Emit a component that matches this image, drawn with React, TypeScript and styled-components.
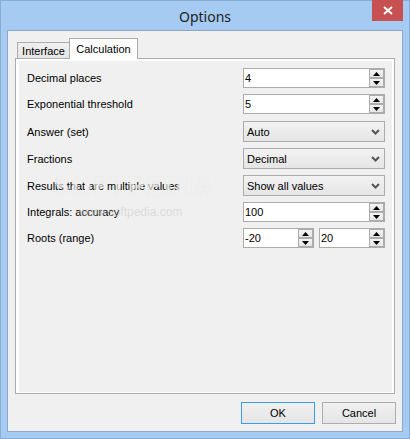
import React from "react";
import styled, { createGlobalStyle } from "styled-components";

const GlobalStyle = createGlobalStyle`
  html, body { margin: 0; padding: 0; width: 410px; height: 439px; overflow: hidden; background: #a6cbf3; }
  * { box-sizing: border-box; }
`;

const Window = styled.div`
  position: relative;
  width: 410px;
  height: 439px;
  background: #a6cbf3;
  border: 1px solid #88acd6;
  display: flex;
  flex-direction: column;
  font-family: "Liberation Sans", Arial, sans-serif;
  font-size: 11px;
  color: #000;
`;

const TitleBar = styled.div`
  height: 29px;
  display: flex;
  align-items: center;
  justify-content: center;
  font-family: "Segoe UI", "Noto Sans", sans-serif;
  font-size: 14px;
  color: #222;
  padding-top: 1px;
`;

const CloseButton = styled.div`
  position: absolute;
  top: -1px;
  right: 6px;
  width: 31px;
  height: 21px;
  background: #c75050;
  display: flex;
  align-items: center;
  justify-content: center;
`;

const Client = styled.div`
  flex: 1;
  margin: 0 6px 6px;
  border: 1px solid #8ea6c4;
  background: #f0f0f0;
  padding: 7px;
  display: flex;
  flex-direction: column;
`;

const TabStrip = styled.div`
  height: 20px;
  display: flex;
  align-items: flex-end;
  padding-left: 2px;
`;

const Tab = styled.div<{ $active?: boolean }>`
  position: relative;
  display: flex;
  align-items: center;
  justify-content: center;
  border: 1px solid #acacac;
  border-bottom: none;
  width: ${(p) => (p.$active ? 69 : 53)}px;
  height: ${(p) => (p.$active ? 21 : 16)}px;
  margin-left: ${(p) => (p.$active ? -1 : 0)}px;
  margin-bottom: ${(p) => (p.$active ? -1 : 0)}px;
  background: ${(p) => (p.$active ? "#ffffff" : "linear-gradient(#f0f0f0, #e5e5e5)")};
  z-index: ${(p) => (p.$active ? 1 : 0)};
  padding-top: ${(p) => (p.$active ? 0 : 1)}px;
`;

const Panel = styled.div`
  height: 336px;
  border: 1px solid #acacac;
  background: #ffffff;
  padding: 2px 2px 1px 3px;
  display: flex;
`;

const Page = styled.div`
  flex: 1;
  background: #f0f0f0;
  padding: 7px 6px 0 8px;
  display: flex;
  flex-direction: column;
  gap: 6px;
`;

const Row = styled.div<{ $h: number; $extra?: number }>`
  display: grid;
  grid-template-columns: 216px 142px;
  align-items: center;
  height: ${(p) => p.$h}px;
  margin-top: ${(p) => p.$extra ?? 0}px;
`;

const Label = styled.span`
  white-space: nowrap;
`;

const Pair = styled.div`
  display: flex;
  gap: 5px;
  height: 100%;
`;

const SpinBox = styled.div<{ $w?: number }>`
  display: flex;
  width: ${(p) => (p.$w ? `${p.$w}px` : "100%")};
  height: 100%;
  border: 1px solid #acacac;
  background: #fff;
`;

const Value = styled.span`
  flex: 1;
  display: flex;
  align-items: center;
  padding-left: 1px;
`;

const Spinner = styled.div`
  width: 15px;
  display: flex;
  flex-direction: column;
`;

const SpinBtn = styled.div`
  flex: 1;
  border: 1px solid #acacac;
  background: linear-gradient(#f3f3f3, #e6e6e6);
  display: flex;
  align-items: center;
  justify-content: center;
`;

const Combo = styled.div`
  display: flex;
  align-items: center;
  justify-content: space-between;
  height: 100%;
  border: 1px solid #acacac;
  background: linear-gradient(#f2f2f2, #e5e5e5);
  padding: 0 4px 0 3px;
`;

const Footer = styled.div`
  display: flex;
  justify-content: flex-end;
  gap: 7px;
  margin-top: 8px;
  margin-right: -1px;
`;

const Button = styled.div<{ $default?: boolean }>`
  width: 74px;
  height: 22px;
  display: flex;
  align-items: center;
  justify-content: center;
  border: 1px solid ${(p) => (p.$default ? "#3c9cf0" : "#acacac")};
  background: linear-gradient(#f0f0f0, #e5e5e5);
`;

const Watermark = styled.div`
  position: absolute;
  left: 52px;
  top: 172px;
  pointer-events: none;
  display: flex;
  flex-direction: column;
  align-items: flex-start;
`;

const WmBig = styled.span`
  font-family: "DejaVu Sans", sans-serif;
  font-weight: bold;
  font-size: 24px;
  letter-spacing: 1px;
  color: rgba(255, 255, 255, 0.55);
  text-shadow: 0 0 1px rgba(190, 190, 190, 0.35);
`;

const WmSmall = styled.span`
  margin-left: 26px;
  margin-top: 4px;
  font-family: "Liberation Sans", Arial, sans-serif;
  font-size: 12px;
  color: rgba(200, 200, 200, 0.55);
`;

const Up = () => (
  <svg width="7" height="4" viewBox="0 0 7 4">
    <polygon points="0,4 7,4 3.5,0" fill="#000" />
  </svg>
);
const Down = () => (
  <svg width="7" height="4" viewBox="0 0 7 4">
    <polygon points="0,0 7,0 3.5,4" fill="#000" />
  </svg>
);
const Chevron = () => (
  <svg width="9" height="6" viewBox="0 0 9 6">
    <polyline points="1,1 4.5,4.5 8,1" fill="none" stroke="#555" strokeWidth="2" />
  </svg>
);

const Numeric = ({ value, w }: { value: string; w?: number }) => (
  <SpinBox $w={w}>
    <Value>{value}</Value>
    <Spinner>
      <SpinBtn>
        <Up />
      </SpinBtn>
      <SpinBtn>
        <Down />
      </SpinBtn>
    </Spinner>
  </SpinBox>
);

const Select = ({ value }: { value: string }) => (
  <Combo>
    <span>{value}</span>
    <Chevron />
  </Combo>
);

export default function App() {
  return (
    <>
      <GlobalStyle />
      <Window>
        <TitleBar>Options</TitleBar>
        <CloseButton>
          <svg width="10" height="9" viewBox="0 0 10 9">
            <path d="M1 1 L9 8 M9 1 L1 8" stroke="#fff" strokeWidth="2" />
          </svg>
        </CloseButton>
        <Client>
          <TabStrip>
            <Tab>Interface</Tab>
            <Tab $active>Calculation</Tab>
          </TabStrip>
          <Panel>
            <Page>
              <Row $h={20}>
                <Label>Decimal places</Label>
                <Numeric value="4" />
              </Row>
              <Row $h={20}>
                <Label>Exponential threshold</Label>
                <Numeric value="5" />
              </Row>
              <Row $h={21} $extra={1}>
                <Label>Answer (set)</Label>
                <Select value="Auto" />
              </Row>
              <Row $h={21}>
                <Label>Fractions</Label>
                <Select value="Decimal" />
              </Row>
              <Row $h={21}>
                <Label>Results that are multiple values</Label>
                <Select value="Show all values" />
              </Row>
              <Row $h={20}>
                <Label>Integrals: accuracy</Label>
                <Numeric value="100" />
              </Row>
              <Row $h={20}>
                <Label>Roots (range)</Label>
                <Pair>
                  <Numeric value="-20" w={71} />
                  <Numeric value="20" w={66} />
                </Pair>
              </Row>
            </Page>
          </Panel>
          <Footer>
            <Button $default>OK</Button>
            <Button>Cancel</Button>
          </Footer>
        </Client>
        <Watermark>
          <WmBig>SOFTPEDIA</WmBig>
          <WmSmall>www.softpedia.com</WmSmall>
        </Watermark>
      </Window>
    </>
  );
}
